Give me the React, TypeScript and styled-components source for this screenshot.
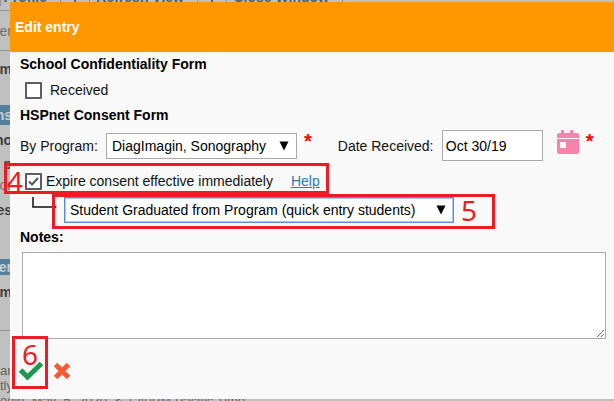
import React from "react";
import styled, { createGlobalStyle, css } from "styled-components";

const GlobalStyle = createGlobalStyle`
  *, *::before, *::after { box-sizing: border-box; }
  body {
    margin: 0;
    background: #c0c0c0;
    font-family: "Liberation Sans", Arial, sans-serif;
    font-size: 14px;
    line-height: 18px;
    color: #111;
  }
`;

const Screen = styled.div`
  position: relative;
  min-height: 100vh;
  overflow: hidden;
`;

/* Dimmed page under the dialog */
const Backdrop = styled.div`
  position: absolute;
  inset: 0;
  overflow: hidden;
  display: flex;
  flex-direction: column;
  background: #c0c0c0;
  color: #626262;
  white-space: nowrap;
  & > * { flex-shrink: 0; }
`;

const TopBar = styled.nav`
  display: flex;
  height: 11px;
  align-items: flex-end;
  padding-bottom: 4px;
  border-bottom: 1px solid #929292;
  font-weight: bold;
  color: #4b5f6c;
`;

const TopLink = styled.span<{ $width: number }>`
  width: ${(p) => p.$width}px;
  height: 18px;
  padding-right: 13px;
  border: solid #929292;
  border-width: 0 1px;
  text-align: right;
`;

const TopDivider = styled.span`
  width: 2px;
  height: 18px;
  margin: 0 13px;
  background: #5d5f80;
`;

const SideLine = styled.div<{ $height: number; $bold?: boolean; $rule?: boolean }>`
  display: flex;
  align-items: center;
  justify-content: flex-end;
  width: 12px;
  height: ${(p) => p.$height}px;
  font-weight: ${(p) => (p.$bold ? "bold" : "normal")};
  color: ${(p) => (p.$bold ? "#3e3e44" : "#707070")};
  border-bottom: ${(p) => (p.$rule ? "1px solid #929292" : "none")};
`;

const SideBand = styled(SideLine)`
  background: #52809f;
  color: #c9ced1;
  font-weight: bold;
`;

const FootNote = styled.div`
  font-size: 13px;
  line-height: 15px;
`;

const Dialog = styled.form`
  position: relative;
  margin: 2px 0 0 10px;
  background: #f9f9f9;
`;

const Header = styled.header`
  display: flex;
  align-items: center;
  height: 50px;
  padding: 0 5px;
  background: #ff9800;
`;

const Title = styled.h1`
  margin: 0;
  font-size: 14px;
  color: #fff;
`;

const Body = styled.div`
  display: flex;
  flex-direction: column;
  padding: 3px 8px 18px 10px;
`;

const headingText = css`
  margin: 0 0 6px;
  font-size: 14px;
  font-weight: bold;
  line-height: 18px;
  color: #000;
`;

const Heading = styled.h2`
  ${headingText}
`;

const NotesLabel = styled.label`
  ${headingText}
`;

const CheckRow = styled.div`
  position: relative;
  display: flex;
  align-items: center;
  height: 22px;
  margin-bottom: 5px;
  padding-left: 5px;
`;

const CheckLabel = styled.label<{ $gap: number }>`
  display: flex;
  align-items: center;
  gap: ${(p) => p.$gap}px;
`;

const CheckMark = styled.span`
  display: grid;
`;

const CheckBox = styled.input`
  appearance: none;
  grid-area: 1 / 1;
  width: 17px;
  height: 17px;
  margin: 0;
  border: 2px solid #5a5d68;
  border-radius: 1px;
  background: #fff;
  & + svg { visibility: hidden; }
  &:checked + svg { visibility: visible; }
`;

const Tick = styled.svg`
  grid-area: 1 / 1;
  z-index: 1;
  pointer-events: none;
`;

const FieldRow = styled.div`
  display: flex;
  align-items: center;
  height: 31px;
  margin-bottom: 9px;
`;

const FieldLabel = styled.label<{ $width: number }>`
  width: ${(p) => p.$width}px;
  white-space: nowrap;
`;

const SelectFrame = styled.span`
  display: inline-grid;
  align-items: center;
  justify-items: end;
`;

const Select = styled.select<{ $width: number; $active?: boolean }>`
  appearance: none;
  grid-area: 1 / 1;
  width: ${(p) => p.$width}px;
  height: 26px;
  padding: 0 22px 0 5px;
  border: 1px solid ${(p) => (p.$active ? "#5b8bdd" : "#a9a9a9")};
  box-shadow: ${(p) => (p.$active ? "inset 0 0 0 1px #a9c6f5" : "none")};
  border-radius: 0;
  background: #fff;
  color: #000;
  font: inherit;
  outline: none;
`;

const Arrow = styled.svg`
  grid-area: 1 / 1;
  margin-right: 8px;
  pointer-events: none;
`;

const Required = styled.span`
  align-self: flex-start;
  margin-left: 7px;
  font-size: 20px;
  font-weight: bold;
  line-height: 22px;
  color: #f00;
`;

const DateGroup = styled.div`
  display: flex;
  align-items: center;
  height: 31px;
  margin-left: 26px;
`;

const DateInput = styled.input`
  width: 101px;
  height: 31px;
  padding: 0 3px;
  border: 1px solid #a9a9a9;
  background: #fff;
  color: #000;
  font: inherit;
`;

const IconButton = styled.button`
  display: flex;
  padding: 0;
  border: 0;
  background: none;
`;

const CalendarButton = styled(IconButton)`
  align-self: flex-start;
  margin-left: 14px;
`;

const HelpLink = styled.a`
  margin-left: 18px;
  color: #2a7ab8;
`;

const ReasonRow = styled.div`
  position: relative;
  display: flex;
  height: 26px;
  margin-bottom: 5px;
  padding-left: 12px;
`;

const Branch = styled.svg`
  margin-right: 7px;
`;

const Notes = styled.textarea`
  display: block;
  height: 87px;
  margin: 0 0 0 2px;
  border: 1px solid #a9a9a9;
  background: #fff;
  font: inherit;
`;

const Actions = styled.div`
  position: relative;
  display: flex;
  align-items: center;
  gap: 9px;
  height: 20px;
  margin: 22px 0 0 -2px;
`;

/* Numbered red call-out drawn over the form */
const Callout = styled.div<{
  $left: number;
  $top: number;
  $width: number;
  $height: number;
}>`
  position: absolute;
  z-index: 2;
  left: ${(p) => p.$left}px;
  top: ${(p) => p.$top}px;
  width: ${(p) => p.$width}px;
  height: ${(p) => p.$height}px;
  border: 3px solid #ed1c24;
  color: #ed1c24;
  font-family: "Noto Sans", "Open Sans", sans-serif;
  font-size: 28px;
  line-height: 30px;
  pointer-events: none;
`;

const EndCallout = styled(Callout)`
  padding-right: 15px;
  line-height: 26px;
  text-align: right;
`;

const NarrowCallout = styled(Callout)`
  text-align: center;
`;

function SelectBox(props: {
  id: string;
  text: string;
  width: number;
  active?: boolean;
  label?: string;
}) {
  return (
    <SelectFrame>
      <Select id={props.id} $width={props.width} $active={props.active} aria-label={props.label}>
        <option>{props.text}</option>
      </Select>
      <Arrow width="10" height="10" viewBox="0 0 10 10" aria-hidden="true">
        <path d="M0.5 0.5H9.5L5 9.5Z" fill="#000" />
      </Arrow>
    </SelectFrame>
  );
}

function Check({ checked }: { checked?: boolean }) {
  return (
    <CheckMark>
      <CheckBox type="checkbox" defaultChecked={checked} />
      <Tick width="17" height="17" viewBox="0 0 17 17">
        <path d="M4 8.5L7 11.5L13 5" fill="none" stroke="#55555c" strokeWidth="2" />
      </Tick>
    </CheckMark>
  );
}

export default function App() {
  return (
    <Screen>
      <GlobalStyle />
      <Backdrop aria-hidden="true">
        <TopBar>
          <TopLink $width={61}>Profile</TopLink>
          <TopDivider />
          <TopLink $width={109}>Refresh View</TopLink>
          <TopDivider />
          <TopLink $width={117}>Close Window</TopLink>
        </TopBar>
        <SideLine $height={40} $rule>er</SideLine>
        <SideLine $height={36} $bold>m</SideLine>
        <SideLine $height={18} />
        <SideBand $height={20}>ns</SideBand>
        <SideLine $height={30} $bold>ho</SideLine>
        <SideLine $height={18} $bold>p</SideLine>
        <SideLine $height={24}>or</SideLine>
        <SideLine $height={26} $bold>es</SideLine>
        <SideLine $height={36} />
        <SideBand $height={16}>er</SideBand>
        <SideLine $height={34} $bold>m</SideLine>
        <SideLine $height={22} $rule />
        <SideLine $height={32} />
        <FootNote>an</FootNote>
        <FootNote>tly</FootNote>
        <FootNote>ogin: May&nbsp; 5, 2020, &amp; 1:40PM Pacific Time</FootNote>
      </Backdrop>

      <Dialog onSubmit={(e) => e.preventDefault()}>
        <Header>
          <Title>Edit entry</Title>
        </Header>
        <Body>
          <Heading>School Confidentiality Form</Heading>
          <CheckRow>
            <CheckLabel $gap={8}>
              <Check />
              Received
            </CheckLabel>
          </CheckRow>

          <Heading>HSPnet Consent Form</Heading>
          <FieldRow>
            <FieldLabel $width={86} htmlFor="program">By Program:</FieldLabel>
            <SelectBox id="program" width={191} text="DiagImagin, Sonography" />
            <Required>*</Required>
            <DateGroup>
              <FieldLabel $width={104} htmlFor="received">Date Received:</FieldLabel>
              <DateInput id="received" type="text" defaultValue="Oct 30/19" />
              <CalendarButton type="button" aria-label="Choose date">
                <svg width="22" height="24" viewBox="0 0 22 24">
                  <path
                    fill="#fa82ab"
                    fillRule="evenodd"
                    d="M4 0H7V3H13V0H16V3H20Q22 3 22 5V8H0V5Q0 3 2 3H4ZM0 9H22V22Q22 24 20 24H2Q0 24 0 22ZM3 12V18H9V12Z"
                  />
                </svg>
              </CalendarButton>
              <Required>*</Required>
            </DateGroup>
          </FieldRow>

          <CheckRow>
            <CheckLabel $gap={4}>
              <Check checked />
              Expire consent effective immediately
            </CheckLabel>
            <HelpLink href="#help">Help</HelpLink>
            <Callout $left={-16} $top={-7} $width={325} $height={31}>4</Callout>
          </CheckRow>

          <ReasonRow>
            <Branch width="25" height="16" viewBox="0 0 25 16" aria-hidden="true">
              <path d="M1 0V10H22" fill="none" stroke="#111" strokeWidth="1.5" />
              <path d="M21 7.5L25 10L21 12.5Z" fill="#111" />
            </Branch>
            <SelectBox
              id="reason"
              label="Reason"
              active
              width={390}
              text="Student Graduated from Program (quick entry students)"
            />
            <EndCallout $left={32} $top={-3} $width={443} $height={35}>5</EndCallout>
          </ReasonRow>

          <NotesLabel htmlFor="notes">Notes:</NotesLabel>
          <Notes id="notes" />

          <Actions>
            <IconButton type="submit" aria-label="Save">
              <svg width="26" height="20" viewBox="0 0 26 20">
                <path d="M2.5 9L9.5 16L23.5 2.5" fill="none" stroke="#219653" strokeWidth="5" />
              </svg>
            </IconButton>
            <IconButton type="button" aria-label="Cancel">
              <svg width="18" height="18" viewBox="0 0 18 18">
                <path d="M2.5 2.5L15.5 15.5M15.5 2.5L2.5 15.5" stroke="#f45b37" strokeWidth="5" />
              </svg>
            </IconButton>
            <NarrowCallout $left={-6} $top={-25} $width={36} $height={53}>6</NarrowCallout>
          </Actions>
        </Body>
      </Dialog>
    </Screen>
  );
}
